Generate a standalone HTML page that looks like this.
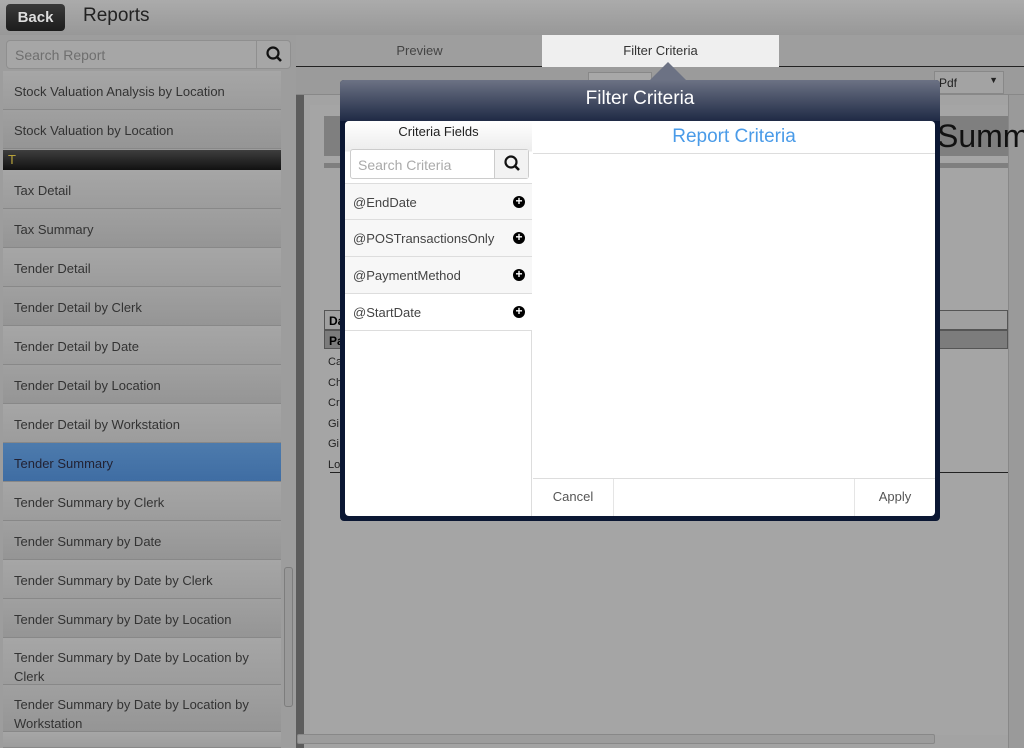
<!DOCTYPE html>
<html style="overflow:hidden;width:1024px;height:748px"><head><meta charset="utf-8"><style>
*{box-sizing:border-box;margin:0;padding:0}
html,body{width:1024px;height:748px;overflow:hidden;background:#a3a3a3}
body{font-family:"Liberation Sans","DejaVu Sans",sans-serif}
#wrap{position:relative;width:1024px;height:748px;overflow:hidden;background:#a3a3a3}
.abs{position:absolute}
#hdr{left:0;top:0;width:1024px;height:35px;background:linear-gradient(#ababab,#989898);}
#back{left:6px;top:4px;width:59px;height:27px;border-radius:4px;background:linear-gradient(#3a3a3a,#1c1c1c);color:#ddd;font-weight:bold;font-size:15px;text-align:center;line-height:27px}
#title{left:83px;top:5px;font-size:19px;color:#222}
#side{left:0;top:35px;width:296px;height:713px;background:#9d9d9d}
#srch{left:6px;top:40px;width:285px;height:29px;border:1px solid #8f8f8f;border-radius:4px;background:#a6a6a6}
#srch span{position:absolute;left:8px;top:6px;font-size:14px;color:#6f6f6f}
#srch i{position:absolute;right:0;top:0;width:34px;height:27px;border-left:1px solid #8f8f8f}
.it{position:absolute;left:3px;width:278px;height:39px;border-bottom:1px solid #888;font-size:13px;color:#333;padding:11px 0 0 11px;line-height:19px;overflow:hidden}
.a{background:linear-gradient(#a6a6a6,#9c9c9c)}
.b{background:linear-gradient(#a0a0a0,#959595)}
.sel{background:linear-gradient(#4d7bad,#3f6da3);color:#223}
#th{left:3px;top:150px;width:278px;height:20px;background:linear-gradient(#3e3e3e,#111);color:#b7a23a;font-size:13px;padding:2px 0 0 5px}
#sb{left:284px;top:567px;width:9px;height:140px;border:1px solid #7d7d7d;border-radius:3px;background:#999}
#tabs{left:296px;top:35px;width:728px;height:32px;background:#9e9e9e;border-bottom:1px solid #222}
.tab{position:absolute;top:35px;height:32px;font-size:13px;color:#444;text-align:center;line-height:32px}
#tb{left:296px;top:67px;width:728px;height:28px;background:#9b9b9b;border-bottom:1px solid #888}
#rep{left:296px;top:95px;width:728px;height:653px;background:#a3a3a3}
#dlg{left:340px;top:80px;width:600px;height:441px;border-radius:4px;background:#0b1733;}
#dh{left:0;top:0;width:600px;height:41px;background:linear-gradient(#6c7284,#1f2a45);border-radius:4px 4px 0 0;color:#fff;font-size:19px;text-align:center;line-height:37px}
#in{left:5px;top:41px;width:590px;height:395px;background:#fff;border-radius:4px;overflow:hidden}
#lc{left:0;top:0;width:187px;height:395px;border-right:1px solid #ddd}
#cfh{left:0;top:0;width:187px;height:62px;background:linear-gradient(#fff,#ececec 30px,#fff 31px);text-align:center;font-size:13px;color:#222;line-height:22px}
#cs{left:5px;top:28px;width:179px;height:30px;border:1px solid #ccc;border-radius:3px;background:#fff}
#cs span{position:absolute;left:7px;top:7px;font-size:14px;color:#aaa}
#cs i{position:absolute;right:0;top:0;width:34px;height:28px;border-left:1px solid #ccc;background:#f2f2f2}
.f{position:absolute;left:0;width:187px;height:37px;border-bottom:1px solid #ddd;background:#f7f7f7;font-size:13px;color:#444;padding:11px 0 0 8px}
.f b{position:absolute;right:7px;top:12px;width:12px;height:12px;border-radius:50%;background:#000;color:#fff;font-size:12px;line-height:11px;text-align:center}
#rc{left:188px;top:0;width:402px;height:33px;border-bottom:1px solid #ddd;text-align:center;color:#4a9be8;font-size:19px;line-height:31px}
#ft{left:188px;top:357px;width:402px;height:38px;border-top:1px solid #ddd;font-size:13px;color:#555}
</style></head><body><div id="wrap">
<div class="abs" id="hdr"></div>
<div class="abs" id="back">Back</div>
<div class="abs" id="title">Reports</div>
<div class="abs" id="side"></div>
<div class="abs" id="srch"><span>Search Report</span><i><svg width="34" height="27"><circle cx="16" cy="12" r="5.5" fill="none" stroke="#111" stroke-width="2.2"/><line x1="20" y1="16" x2="24" y2="20" stroke="#111" stroke-width="2.6"/></svg></i></div>
<div class="it a" style="top:71px">Stock Valuation Analysis by Location</div>
<div class="it b" style="top:110px">Stock Valuation by Location</div>
<div class="abs" id="th">T</div>
<div class="it a" style="top:170px">Tax Detail</div>
<div class="it b" style="top:209px">Tax Summary</div>
<div class="it a" style="top:248px">Tender Detail</div>
<div class="it b" style="top:287px">Tender Detail by Clerk</div>
<div class="it a" style="top:326px">Tender Detail by Date</div>
<div class="it b" style="top:365px">Tender Detail by Location</div>
<div class="it a" style="top:404px">Tender Detail by Workstation</div>
<div class="it sel" style="top:443px">Tender Summary</div>
<div class="it a" style="top:482px">Tender Summary by Clerk</div>
<div class="it b" style="top:521px">Tender Summary by Date</div>
<div class="it a" style="top:560px">Tender Summary by Date by Clerk</div>
<div class="it b" style="top:599px">Tender Summary by Date by Location</div>
<div class="it a" style="top:638px;height:47px;padding-top:10px">Tender Summary by Date by Location by Clerk</div>
<div class="it b" style="top:685px;height:47px;padding-top:10px">Tender Summary by Date by Location by Workstation</div>
<div class="it a" style="top:732px;height:16px">Tender Summary by Location</div>
<div class="abs" id="sb"></div>

<div class="abs" id="tabs"></div>
<div class="tab" style="left:298px;width:243px">Preview</div>
<div class="tab" style="left:542px;width:237px;background:#efefef;color:#333">Filter Criteria</div>
<div class="abs" id="tb"></div>
<div class="abs" style="left:588px;top:72px;width:64px;height:22px;border:1px solid #888;background:#a8a8a8"></div>
<div class="abs" style="left:934px;top:71px;width:70px;height:23px;border:1px solid #888;background:#a3a3a3;font-size:12px;color:#222;padding:4px 0 0 4px">Pdf<span style="position:absolute;right:5px;top:3px;font-size:9px">▼</span></div>
<div class="abs" id="rep"></div>
<div class="abs" style="left:296px;top:95px;width:8px;height:653px;background:#5c5c5c"></div>
<div class="abs" style="left:1008px;top:95px;width:16px;height:653px;background:#9a9a9a;border-left:1px solid #888"></div>
<div class="abs" style="left:310px;top:105px;width:698px;height:630px;background:#a5a5a5"></div>
<div class="abs" style="left:324px;top:116px;width:684px;height:40px;background:#7f7f7f"></div>
<div class="abs" style="left:937px;top:116px;font-size:32px;color:#111;line-height:40px">Summ</div>
<div class="abs" style="left:324px;top:163px;width:684px;height:5px;background:#7f7f7f"></div>
<div class="abs" style="left:324px;top:310px;width:684px;height:20px;border:1px solid #555;background:#a0a0a0;font-size:12px;font-weight:bold;padding:3px 4px">Da</div>
<div class="abs" style="left:324px;top:330px;width:684px;height:19px;border:1px solid #555;background:#7c7c7c;font-size:12px;font-weight:bold;padding:3px 4px">Pa</div>
<div class="abs" style="left:328px;top:352px;font-size:11px;line-height:20.5px;color:#222">Ca<br>Ch<br>Cr<br>Gi<br>Gi<br>Lo</div>
<div class="abs" style="left:330px;top:472px;width:678px;height:1px;background:#222"></div>
<div class="abs" style="left:297px;top:734px;width:638px;height:10px;border:1px solid #888;border-radius:2px;background:#9c9c9c"></div>
<svg class="abs" style="left:650px;top:62px" width="40" height="20"><polygon points="18,0 0,18 36,18" fill="#6c7284"/></svg>

<div class="abs" id="dlg">
 <div class="abs" id="dh">Filter Criteria</div>
 <div class="abs" id="in">
  <div class="abs" id="lc">
   <div class="abs" id="cfh">Criteria Fields</div>
   <div class="abs" id="cs"><span>Search Criteria</span><i><svg width="34" height="28"><circle cx="16" cy="12" r="5.5" fill="none" stroke="#111" stroke-width="2.2"/><line x1="20" y1="16" x2="24" y2="20" stroke="#111" stroke-width="2.6"/></svg></i></div>
   <div class="f" style="top:62px;border-top:1px solid #ddd">@EndDate<b>+</b></div>
   <div class="f" style="top:99px">@POSTransactionsOnly<b>+</b></div>
   <div class="f" style="top:136px">@PaymentMethod<b>+</b></div>
   <div class="f" style="top:173px;background:#fff">@StartDate<b>+</b></div>
  </div>
  <div class="abs" id="rc">Report Criteria</div>
  <div class="abs" id="ft">
   <div class="abs" style="left:0;top:0;width:81px;height:37px;border-right:1px solid #e5e5e5;text-align:center;line-height:36px">Cancel</div>
   <div class="abs" style="left:321px;top:0;width:81px;height:37px;border-left:1px solid #e5e5e5;text-align:center;line-height:36px">Apply</div>
  </div>
 </div>
</div>
</div></body></html>
